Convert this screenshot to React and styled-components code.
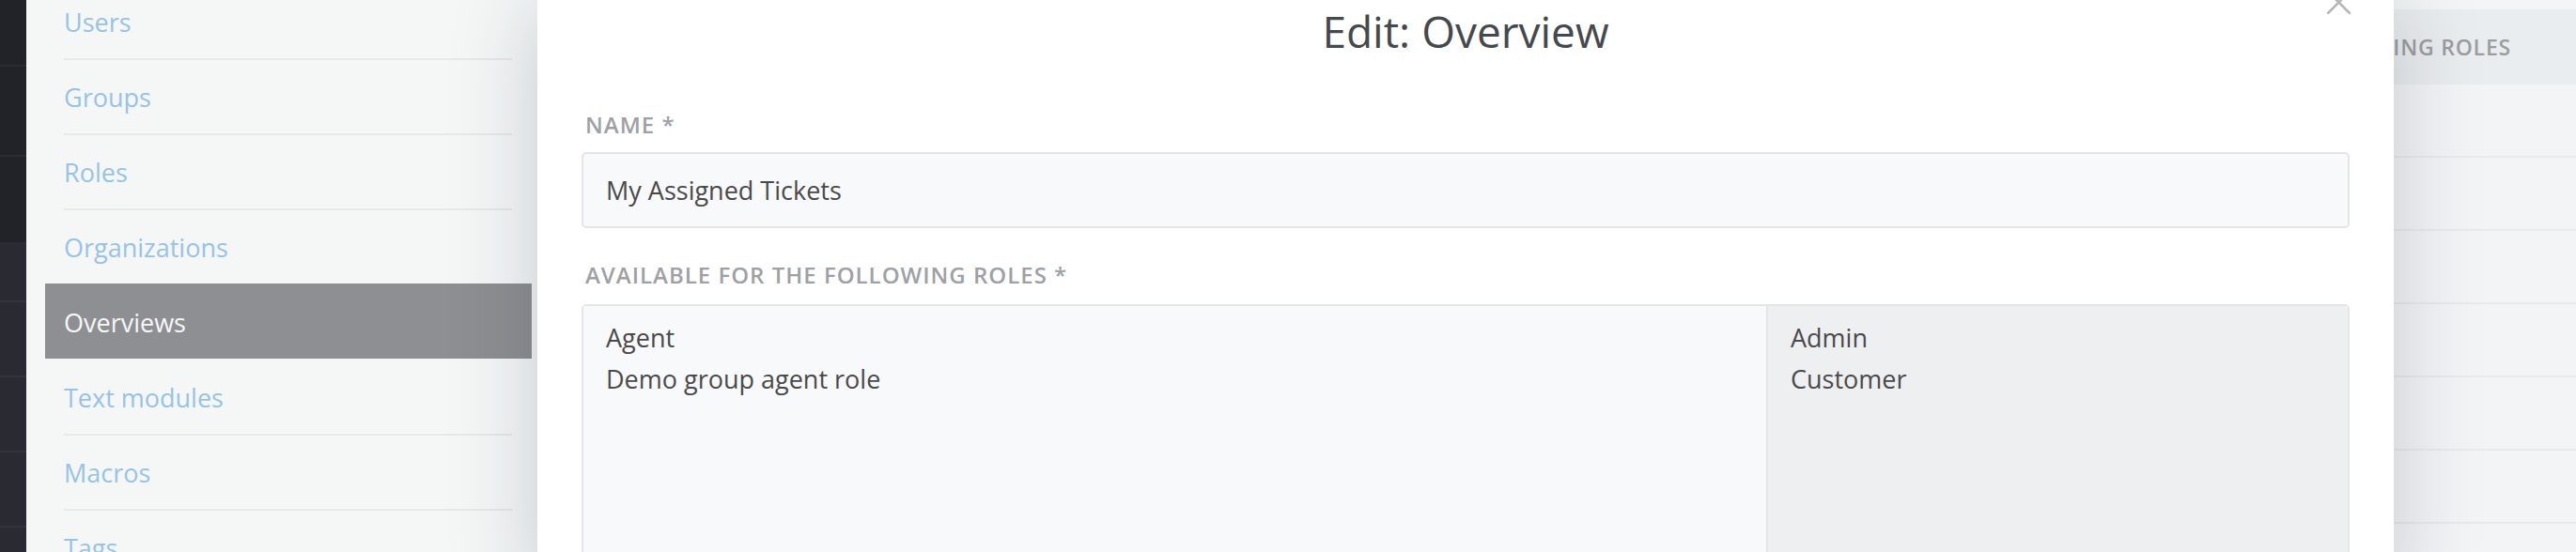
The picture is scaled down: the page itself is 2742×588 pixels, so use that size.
import React from "react";
import styled, { createGlobalStyle } from "styled-components";

const GlobalStyle = createGlobalStyle`
  html, body { margin: 0; padding: 0; overflow: hidden; }
  body { font-family: "Open Sans", "Noto Sans", sans-serif; background: #f5f7f7; }
  #root { width: 2742px; height: 588px; }
`;

const Page = styled.div`
  position: relative;
  display: flex;
  width: 2742px;
  height: 588px;
  overflow: hidden;
`;

const DarkNav = styled.div`
  width: 28px;
  flex: none;
  display: flex;
  flex-direction: column;
`;

const DarkCell = styled.div`
  height: ${(p) => p.$h}px;
  flex: none;
  background: ${(p) => (p.$tone === "light" ? "#2a2b32" : "#222328")};
  border-bottom: 2px solid ${(p) => (p.$tone === "light" ? "#33343b" : "#2c2d32")};
  box-sizing: border-box;
`;

const Sidebar = styled.nav`
  width: 560px;
  flex: none;
  background: #f5f7f7;
  display: flex;
  flex-direction: column;
  margin-top: -18px;
`;

const NavItem = styled.div`
  flex: none;
  margin-left: 20px;
  width: 518px;
  padding: 0 21px 0 20px;
  box-sizing: border-box;
  background: ${(p) => (p.$active ? "#8e8f93" : "transparent")};
`;

const NavInner = styled.div`
  height: 80px;
  box-sizing: border-box;
  border-top: 2px solid ${(p) => (p.$sep ? "#e6e9ea" : "transparent")};
  display: flex;
  align-items: center;
  font-size: 27px;
  color: ${(p) => (p.$active ? "#f7f7f7" : "#97c3e7")};
`;

const Main = styled.div`
  flex: 1;
  background: #f3f4f6;
  display: flex;
  flex-direction: column;
`;

const TopBand = styled.div`
  height: 10px;
  flex: none;
  background: #f3f5f6;
`;

const TableHead = styled.div`
  height: 80px;
  flex: none;
  background: #eaedef;
  display: flex;
  align-items: center;
  justify-content: flex-end;
  padding-right: 69px;
  font-size: 23px;
  font-weight: 600;
  letter-spacing: 0.8px;
  text-transform: uppercase;
  color: #9b9ea1;
  white-space: nowrap;
`;

const TableRow = styled.div`
  height: 78px;
  flex: none;
  box-sizing: border-box;
  border-bottom: 2px solid #e8eaec;
`;

const Modal = styled.div`
  position: absolute;
  top: 0;
  left: 572px;
  width: 1976px;
  height: 640px;
  background: #ffffff;
  box-shadow: 0 0 90px rgba(20, 30, 40, 0.2);
  display: flex;
  flex-direction: column;
`;

const ModalHeader = styled.div`
  position: relative;
  padding-top: 5px;
`;

const Title = styled.h1`
  margin: 0;
  text-align: center;
  font-size: 46px;
  line-height: 56px;
  font-weight: 400;
  color: #45494e;
`;

const CloseButton = styled.div`
  position: absolute;
  right: 46px;
  top: -10px;
  width: 25px;
  height: 25px;
  color: #b5b7ba;
`;

const ModalBody = styled.div`
  padding: 56px 47px 0;
  display: flex;
  flex-direction: column;
`;

const FormGroup = styled.div`
  display: flex;
  flex-direction: column;
  margin-bottom: ${(p) => p.$mb || 0}px;
`;

const Label = styled.label`
  font-size: 24px;
  line-height: 32px;
  font-weight: 600;
  letter-spacing: 1px;
  color: #9da1a5;
  text-transform: uppercase;
  padding-left: 4px;
  margin-bottom: ${(p) => p.$mb}px;
`;

const Input = styled.div`
  height: 81px;
  box-sizing: border-box;
  border: 2px solid #e4e5e7;
  border-radius: 5px;
  background: #f8f9fa;
  padding: 0 24px;
  font-size: 27px;
  line-height: 77px;
  color: #4a4a4a;
`;

const ColumnSelect = styled.div`
  height: 420px;
  box-sizing: border-box;
  border: 2px solid #e4e5e7;
  border-radius: 5px;
  overflow: hidden;
  display: grid;
  grid-template-columns: 1259px 1fr;
`;

const Column = styled.div`
  background: ${(p) => (p.$selected ? "#eeeff1" : "#f8f9fa")};
  border-left: ${(p) => (p.$selected ? "2px solid #e4e5e7" : "none")};
  padding: 12px 24px;
  display: flex;
  flex-direction: column;
`;

const Option = styled.div`
  font-size: 27px;
  line-height: 44px;
  color: #4a4a4a;
`;

const navItems = [
  "Users",
  "Groups",
  "Roles",
  "Organizations",
  "Overviews",
  "Text modules",
  "Macros",
  "Tags",
];
const activeIndex = 4;

const darkCells = [
  { h: 71, tone: "dark" },
  { h: 96, tone: "dark" },
  { h: 93, tone: "dark" },
  { h: 62, tone: "light" },
  { h: 80, tone: "light" },
  { h: 80, tone: "light" },
  { h: 80, tone: "light" },
  { h: 80, tone: "light" },
];

export default function App() {
  return (
    <>
      <GlobalStyle />
      <Page>
        <DarkNav>
          {darkCells.map((c, i) => (
            <DarkCell key={i} $h={c.h} $tone={c.tone} />
          ))}
        </DarkNav>
        <Sidebar>
          {navItems.map((name, i) => {
            const active = i === activeIndex;
            const sep = i !== 0 && !active && i - 1 !== activeIndex;
            return (
              <NavItem key={name} $active={active}>
                <NavInner $active={active} $sep={sep}>
                  {name}
                </NavInner>
              </NavItem>
            );
          })}
        </Sidebar>
        <Main>
          <TopBand />
          <TableHead>Available for the following roles</TableHead>
          {Array.from({ length: 7 }).map((_, i) => (
            <TableRow key={i} />
          ))}
        </Main>
        <Modal>
          <ModalHeader>
            <Title>Edit: Overview</Title>
            <CloseButton>
              <svg width="25" height="25" viewBox="0 0 25 25">
                <path
                  d="M1 1 L24 24 M24 1 L1 24"
                  stroke="currentColor"
                  strokeWidth="2.6"
                  strokeLinecap="round"
                  fill="none"
                />
              </svg>
            </CloseButton>
          </ModalHeader>
          <ModalBody>
            <FormGroup $mb={34}>
              <Label $mb={13}>Name *</Label>
              <Input>My Assigned Tickets</Input>
            </FormGroup>
            <FormGroup>
              <Label $mb={15}>Available for the following roles *</Label>
              <ColumnSelect>
                <Column>
                  <Option>Agent</Option>
                  <Option>Demo group agent role</Option>
                </Column>
                <Column $selected>
                  <Option>Admin</Option>
                  <Option>Customer</Option>
                </Column>
              </ColumnSelect>
            </FormGroup>
          </ModalBody>
        </Modal>
      </Page>
    </>
  );
}
